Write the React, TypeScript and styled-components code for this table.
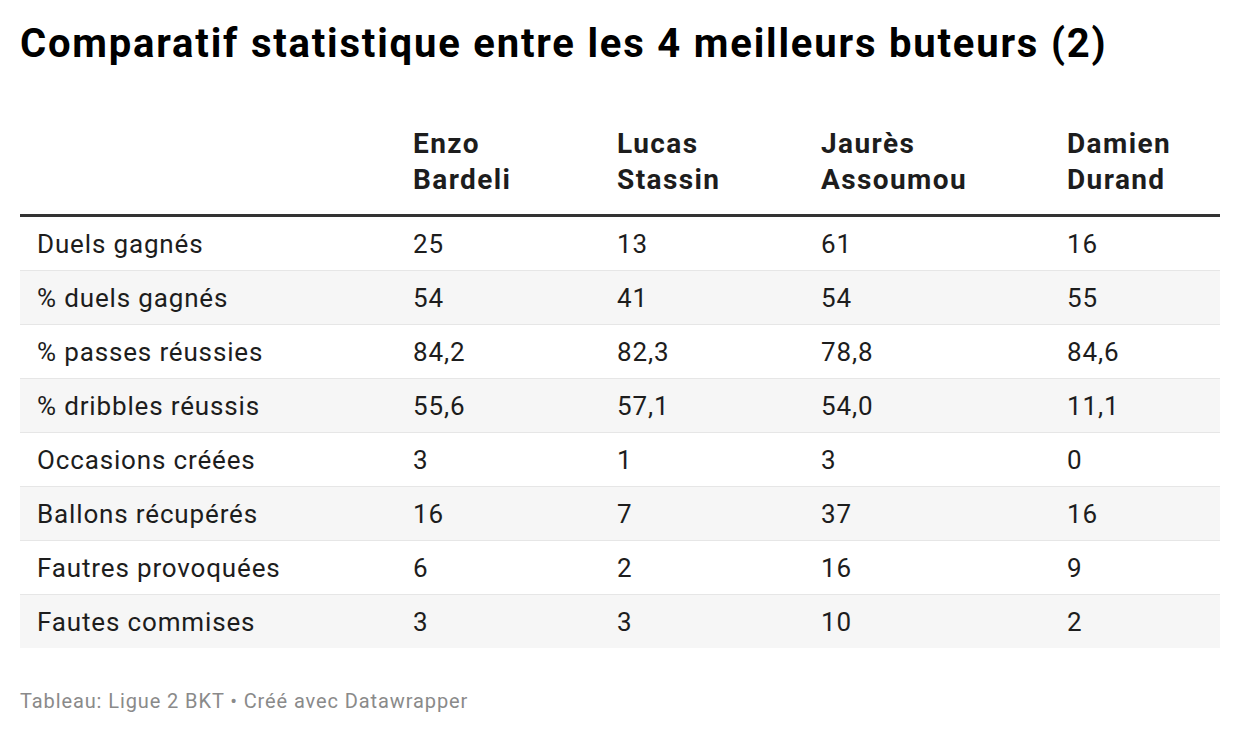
import React from "react";
import styled, { createGlobalStyle } from "styled-components";

const Global = createGlobalStyle`
  html, body { margin: 0; padding: 0; background: #ffffff; }
  body { font-family: Roboto, "Liberation Sans", sans-serif; color: #1d1d1d; }
`;

const Page = styled.div`
  width: 1240px;
  padding: 20px 20px 0 20px;
  box-sizing: border-box;
`;

const Title = styled.h1`
  margin: 0;
  font-size: 40px;
  line-height: 48px;
  font-weight: 700;
  color: #000;
  letter-spacing: 1.8px;
  white-space: nowrap;
`;

const Table = styled.div`
  margin-top: 58px;
  display: grid;
  grid-template-columns: 376px 204px 204px 246px 1fr;
`;

const HeadCell = styled.div`
  font-size: 28px;
  line-height: 36px;
  font-weight: 700;
  letter-spacing: 1.4px;
  color: #1d1d1d;
  padding: 0 0 16px 17px;
  border-bottom: 3px solid #333333;
`;

const Cell = styled.div<{ $alt: boolean; $last: boolean }>`
  height: 53px;
  display: flex;
  align-items: center;
  padding-left: 17px;
  font-size: 26px;
  letter-spacing: 0.85px;
  color: #1d1d1d;
  background: ${(p) => (p.$alt ? "#f6f6f6" : "#ffffff")};
  border-bottom: ${(p) => (p.$last ? "none" : "1px solid #e6e6e6")};
`;

const Footer = styled.div`
  margin-top: 41px;
  font-size: 20px;
  letter-spacing: 0.9px;
  color: #8a8a8a;
`;

const players = [
  ["Enzo", "Bardeli"],
  ["Lucas", "Stassin"],
  ["Jaurès", "Assoumou"],
  ["Damien", "Durand"],
];

const rows: [string, string[]][] = [
  ["Duels gagnés", ["25", "13", "61", "16"]],
  ["% duels gagnés", ["54", "41", "54", "55"]],
  ["% passes réussies", ["84,2", "82,3", "78,8", "84,6"]],
  ["% dribbles réussis", ["55,6", "57,1", "54,0", "11,1"]],
  ["Occasions créées", ["3", "1", "3", "0"]],
  ["Ballons récupérés", ["16", "7", "37", "16"]],
  ["Fautres provoquées", ["6", "2", "16", "9"]],
  ["Fautes commises", ["3", "3", "10", "2"]],
];

export default function App() {
  return (
    <Page>
      <Global />
      <Title>Comparatif statistique entre les 4 meilleurs buteurs (2)</Title>
      <Table>
        <HeadCell />
        {players.map((p) => (
          <HeadCell key={p[1]}>
            {p[0]}
            <br />
            {p[1]}
          </HeadCell>
        ))}
        {rows.map(([label, vals], i) => {
          const alt = i % 2 === 1;
          const last = i === rows.length - 1;
          return (
            <React.Fragment key={label}>
              <Cell $alt={alt} $last={last}>{label}</Cell>
              {vals.map((v, j) => (
                <Cell key={j} $alt={alt} $last={last}>{v}</Cell>
              ))}
            </React.Fragment>
          );
        })}
      </Table>
      <Footer>Tableau: Ligue 2 BKT • Créé avec Datawrapper</Footer>
    </Page>
  );
}
